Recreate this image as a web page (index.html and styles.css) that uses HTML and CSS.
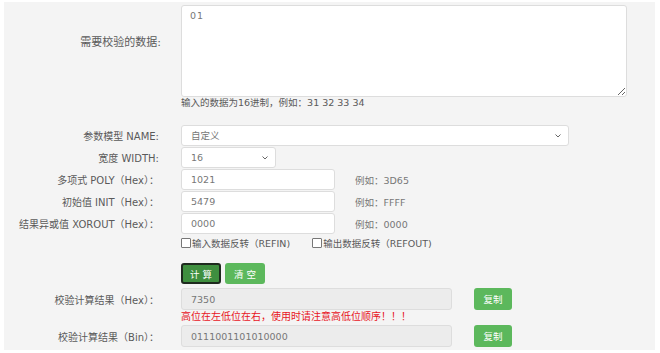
FILE: index.html
```html
<!DOCTYPE html>
<html lang="zh">
<head>
  <meta charset="UTF-8">
  <title>CRC计算</title>
  <link rel="stylesheet" href="styles.css">
</head>
<body>

  <div class="panel">
    <div class="row row-data">
      <label class="lbl lbl-top">需要校验的数据:</label>
      <div class="field-col">
        <textarea class="data-input">01</textarea>
        <div class="hint">输入的数据为16进制，例如：31 32 33 34</div>
      </div>
    </div>

    <div class="row row-first">
      <label class="lbl">参数模型 NAME:</label>
      <div class="sel-wrap sel-name">
        <select class="ctl sel"><option>自定义</option></select>
        <svg class="arrow" width="6" height="4" viewBox="0 0 6 4"><path d="M0.5 0.5 L3 3 L5.5 0.5" fill="none" stroke="#666" stroke-width="1"/></svg>
      </div>
    </div>

    <div class="row">
      <label class="lbl">宽度 WIDTH:</label>
      <div class="sel-wrap sel-width">
        <select class="ctl sel"><option>16</option></select>
        <svg class="arrow" width="6" height="4" viewBox="0 0 6 4"><path d="M0.5 0.5 L3 3 L5.5 0.5" fill="none" stroke="#666" stroke-width="1"/></svg>
      </div>
    </div>

    <div class="row">
      <label class="lbl">多项式 POLY（Hex）：</label>
      <div class="inline">
        <input class="ctl txt" type="text" value="1021">
        <span class="eg">例如：3D65</span>
      </div>
    </div>

    <div class="row">
      <label class="lbl">初始值 INIT（Hex）：</label>
      <div class="inline">
        <input class="ctl txt" type="text" value="5479">
        <span class="eg">例如：FFFF</span>
      </div>
    </div>

    <div class="row">
      <label class="lbl">结果异或值 XOROUT（Hex）：</label>
      <div class="inline">
        <input class="ctl txt" type="text" value="0000">
        <span class="eg">例如：0000</span>
      </div>
    </div>

    <div class="row row-check">
      <span></span>
      <div class="checks">
        <label class="chk"><span class="box"></span>输入数据反转（REFIN)</label>
        <label class="chk"><span class="box"></span>输出数据反转（REFOUT)</label>
      </div>
    </div>

    <div class="row row-btns">
      <span></span>
      <div class="btns">
        <button class="btn btn-calc">计 算</button>
        <button class="btn">清 空</button>
      </div>
    </div>

    <div class="row row-result">
      <label class="lbl">校验计算结果（Hex）：</label>
      <div class="inline">
        <input class="ctl res" type="text" value="7350" disabled>
        <button class="btn btn-copy">复制</button>
      </div>
    </div>

    <div class="row row-warn">
      <span></span>
      <div class="warn">高位在左低位在右，使用时请注意高低位顺序！！！</div>
    </div>

    <div class="row row-bin">
      <label class="lbl">校验计算结果（Bin）：</label>
      <div class="inline">
        <input class="ctl res" type="text" value="0111001101010000" disabled>
        <button class="btn btn-copy">复制</button>
      </div>
    </div>
  </div>

</body>
</html>
```

FILE: styles.css
```css
body {
  margin: 0;
  background-color: #fff;
  font-family: "DejaVu Sans", "Noto Sans CJK SC", sans-serif;
  font-size: 10px;
  color: #666;
}
.panel {
  margin: 2px 0 0 4px;
  width: 651px;
  height: 348px;
  padding-top: 3px;
  box-sizing: border-box;
  background-color: #f4f4f4;
}
.row {
  display: grid;
  grid-template-columns: 177px 1fr;
  align-items: center;
  margin-top: 1px;
}
.lbl {
  text-align: right;
  padding-right: 22px;
  color: #5a5a5a;
  white-space: nowrap;
}
.row-data {
  align-items: start;
  margin-top: 0;
}
.lbl-top {
  padding-top: 28px;
  padding-right: 20px;
  font-size: 11px;
}
.data-input {
  display: block;
  width: 446px;
  height: 92px;
  box-sizing: border-box;
  padding: 4px 8px;
  border: 1px solid #ddd;
  border-radius: 3px;
  background-color: #fff;
  font-family: inherit;
  font-size: 9.5px;
  letter-spacing: 1px;
  color: #777;
  resize: vertical;
}
.hint {
  line-height: 12px;
  font-size: 9.5px;
  color: #5a5a5a;
}
.row-first {
  margin-top: 16px;
}
.ctl {
  height: 21px;
  box-sizing: border-box;
  border: 1px solid #ddd;
  border-radius: 3px;
  background-color: #fff;
  padding: 0 9px;
  font-family: inherit;
  font-size: 9.5px;
  color: #777;
}
.sel-wrap {
  position: relative;
}
.sel {
  -webkit-appearance: none;
  appearance: none;
  width: 100%;
}
.sel-name {
  width: 388px;
}
.sel-width {
  width: 95px;
}
.arrow {
  position: absolute;
  right: 8px;
  top: 9px;
}
.inline {
  display: flex;
  align-items: center;
}
.txt {
  width: 154px;
}
.eg {
  margin-left: 20px;
  font-size: 9.5px;
  color: #777;
}
.row-check {
  margin-top: 2px;
  height: 12px;
}
.checks {
  display: flex;
  gap: 22px;
  font-size: 9.5px;
  color: #5a5a5a;
}
.chk {
  display: flex;
  align-items: center;
}
.box {
  width: 8px;
  height: 8px;
  border: 1px solid #777;
  background-color: #fff;
  border-radius: 1px;
  margin-right: 1px;
}
.row-btns {
  margin-top: 15px;
}
.btns {
  display: flex;
  gap: 4px;
}
.btn {
  height: 21px;
  width: 40px;
  padding: 0;
  border: none;
  border-radius: 3px;
  background-color: #5cb85c;
  color: #fff;
  font-family: inherit;
  font-size: 9.5px;
  cursor: pointer;
}
.btn-calc {
  background-color: #3f8f3f;
  border: 2px solid #1e2a1e;
}
.row-result {
  margin-top: 4px;
}
.res {
  width: 271px;
  height: 22px;
  background-color: #ececec;
}
.btn-copy {
  width: 38px;
  height: 22px;
  margin-left: 22px;
}
.row-warn {
  height: 12px;
  margin-top: 1px;
}
.warn {
  color: #e8141e;
  font-size: 10px;
  line-height: 12px;
}
.row-bin {
  margin-top: 2px;
}
```
